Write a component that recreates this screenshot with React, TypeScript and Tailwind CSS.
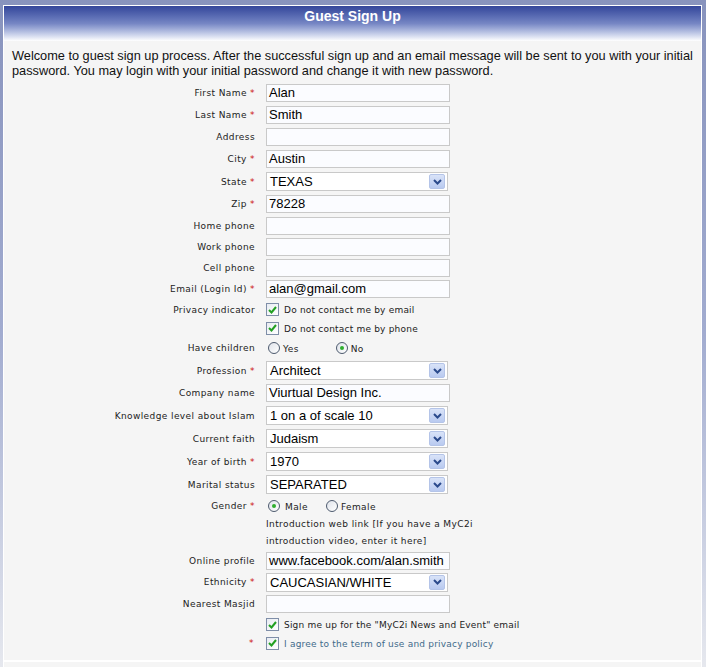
import { ReactNode } from 'react';

const labelFont = "font-['DejaVu_Sans',Verdana,sans-serif] text-[9px] tracking-[0.4px] text-[#222]";
const optFont = "font-['DejaVu_Sans',Verdana,sans-serif] text-[9px] tracking-[0.2px] text-[#222]";

const Label = ({ text, req }: { text?: string; req?: boolean }) => (
  <div className={`w-[251px] shrink-0 pt-[2px] text-right ${labelFont}`}>
    {text}
    {req && <span className="text-[#cc1111]"> *</span>}
  </div>
);

const Row = ({ label, req, h = 'h-[22px]', children }: { label?: string; req?: boolean; h?: string; children?: ReactNode }) => (
  <div className={`flex items-center ${h}`}>
    <Label text={label} req={req} />
    <div className="ml-[11px] flex items-center">{children}</div>
  </div>
);

const TextBox = ({ value = '' }: { value?: string }) => (
  <div className="h-[18px] w-[184px] overflow-hidden whitespace-nowrap border border-[#c9c9c9] bg-[#fbfcff] pl-[2px] text-[13px] leading-[16px] text-black">
    {value}
  </div>
);

const SelectBox = ({ value }: { value: string }) => (
  <div className="flex h-[19px] w-[182px] items-center justify-between border border-[#c9c9c9] bg-white pl-[3px] pr-[2px] text-[13px] leading-[17px] text-black">
    <span className="whitespace-nowrap">{value}</span>
    <span className="flex h-[15px] w-[16px] items-center justify-center rounded-[2px] border border-[#b4c4e8] bg-gradient-to-b from-[#d9e3f8] to-[#b9caf0]">
      <svg width="9" height="6" viewBox="0 0 9 6">
        <path d="M1 1 L4.5 4.5 L8 1" fill="none" stroke="#2b4a8c" strokeWidth="2" />
      </svg>
    </span>
  </div>
);

const Check = () => (
  <span className="flex h-[13px] w-[13px] shrink-0 items-center justify-center border border-[#7f8ea8] bg-gradient-to-br from-[#e8ecf2] to-white">
    <svg width="9" height="8" viewBox="0 0 9 8">
      <path d="M1 4 L3.5 6.5 L8 1" fill="none" stroke="#22a022" strokeWidth="2" />
    </svg>
  </span>
);

const Radio = ({ on }: { on?: boolean }) => (
  <span className="flex h-[12px] w-[12px] items-center justify-center rounded-full border border-[#4d5a6e] bg-gradient-to-br from-[#dfe3ea] to-white">
    {on && <span className="h-[4px] w-[4px] rounded-full bg-[#2fae2f]" />}
  </span>
);

export default function App() {
  return (
    <div className="h-[667px] w-[706px] overflow-hidden bg-gradient-to-b from-[#8893bd] via-[#a2acd0] to-[#e6e8ee] pl-[3px] pr-[4px] pt-[5px] font-['Liberation_Sans',Arial,sans-serif]">
      <div className="h-full border-x border-t border-white bg-[#f5f5f5]">
        <div className="flex h-[35px] justify-center bg-gradient-to-b from-[#34459a] via-[#7686c4] to-white pt-[2px] text-[14px] font-bold leading-[17px] text-white">
          Guest Sign Up
        </div>
        <p className="whitespace-nowrap px-[8px] pt-[7px] text-[12.75px] leading-[15px] text-[#111]">
          Welcome to guest sign up process. After the successful sign up and an email message will be sent to you with your initial
          <br />
          password. You may login with your initial password and change it with new password.
        </p>
        <div className="mt-[4px]">
          <Row label="First Name" req>
            <TextBox value="Alan" />
          </Row>
          <Row label="Last Name" req>
            <TextBox value="Smith" />
          </Row>
          <Row label="Address">
            <TextBox />
          </Row>
          <Row label="City" req>
            <TextBox value="Austin" />
          </Row>
          <Row label="State" req h="h-[23px]">
            <SelectBox value="TEXAS" />
          </Row>
          <Row label="Zip" req>
            <TextBox value="78228" />
          </Row>
          <Row label="Home phone" h="h-[21px]">
            <TextBox />
          </Row>
          <Row label="Work phone" h="h-[21px]">
            <TextBox />
          </Row>
          <Row label="Cell phone" h="h-[21px]">
            <TextBox />
          </Row>
          <Row label="Email (Login Id)" req>
            <TextBox value="alan@gmail.com" />
          </Row>
          <div className="flex h-[19px] items-center">
            <Label text="Privacy indicator" />
            <div className={`ml-[11px] flex items-center gap-[5px] ${optFont}`}>
              <Check />
              <span className="pt-[3px]">Do not contact me by email</span>
            </div>
          </div>
          <Row h="h-[18px]">
            <div className={`flex items-center gap-[5px] ${optFont}`}>
              <Check />
              <span className="pt-[3px]">Do not contact me by phone</span>
            </div>
          </Row>
          <Row label="Have children" h="h-[22px]">
            <div className={`flex items-center ${labelFont}`}>
              <span className="ml-[2px]"><Radio /></span>
              <span className="ml-[3px] pt-[4px]">Yes</span>
              <span className="ml-[37px]"><Radio on /></span>
              <span className="ml-[3px] pt-[4px]">No</span>
            </div>
          </Row>
          <Row label="Profession" req h="h-[23px]">
            <SelectBox value="Architect" />
          </Row>
          <Row label="Company name">
            <TextBox value="Viurtual Design Inc." />
          </Row>
          <Row label="Knowledge level about Islam" h="h-[23px]">
            <SelectBox value="1 on a of scale 10" />
          </Row>
          <Row label="Current faith" h="h-[23px]">
            <SelectBox value="Judaism" />
          </Row>
          <Row label="Year of birth" req h="h-[23px]">
            <SelectBox value="1970" />
          </Row>
          <Row label="Marital status" h="h-[23px]">
            <SelectBox value="SEPARATED" />
          </Row>
          <Row label="Gender" req h="h-[20px]">
            <div className={`flex items-center ${labelFont}`}>
              <span className="ml-[2px]"><Radio on /></span>
              <span className="ml-[5px] pt-[4px]">Male</span>
              <span className="ml-[18px]"><Radio /></span>
              <span className="ml-[3px] pt-[4px]">Female</span>
            </div>
          </Row>
          <div className="flex">
            <Label />
            <div className={`ml-[11px] whitespace-nowrap leading-[17px] ${labelFont}`}>
              Introduction web link [If you have a MyC2i
              <br />
              introduction video, enter it here]
            </div>
          </div>
          <Row label="Online profile" h="h-[21px]">
            <TextBox value="www.facebook.com/alan.smith" />
          </Row>
          <Row label="Ethnicity" req h="h-[22px]">
            <SelectBox value="CAUCASIAN/WHITE" />
          </Row>
          <Row label="Nearest Masjid">
            <TextBox />
          </Row>
          <Row h="h-[19px]">
            <div className={`flex items-center gap-[5px] whitespace-nowrap ${optFont}`}>
              <Check />
              <span className="pt-[3px]">Sign me up for the "MyC2i News and Event" email</span>
            </div>
          </Row>
          <div className="flex h-[18px] items-center">
            <div className={`w-[251px] shrink-0 pr-[1px] pt-[2px] text-right ${labelFont}`}>
              <span className="text-[#cc1111]">*</span>
            </div>
            <div className={`ml-[11px] flex items-center gap-[5px] whitespace-nowrap ${optFont}`}>
              <Check />
              <span className="pt-[3px] text-[#3f6a8a]">I agree to the term of use and privacy policy</span>
            </div>
          </div>
        </div>
        <div className="mt-[8px] h-[2px] bg-white" />
      </div>
    </div>
  );
}
